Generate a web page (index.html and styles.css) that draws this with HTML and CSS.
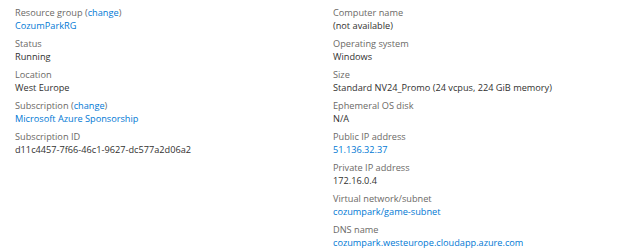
FILE: index.html
```html
<!DOCTYPE html>
<html>
<head>
<meta charset="utf-8">
<link rel="stylesheet" href="styles.css">
</head>
<body>
<div class="essentials">
  <div class="col">
    <div class="item"><div class="label">Resource group (<a class="link" href="#">change</a>)</div><div class="value"><a class="link" href="#">CozumParkRG</a></div></div>
    <div class="item"><div class="label">Status</div><div class="value">Running</div></div>
    <div class="item"><div class="label">Location</div><div class="value">West Europe</div></div>
    <div class="item"><div class="label">Subscription (<a class="link" href="#">change</a>)</div><div class="value"><a class="link" href="#">Microsoft Azure Sponsorship</a></div></div>
    <div class="item"><div class="label">Subscription ID</div><div class="value">d11c4457-7f66-46c1-9627-dc577a2d06a2</div></div>
  </div>
  <div class="col">
    <div class="item"><div class="label">Computer name</div><div class="value">(not available)</div></div>
    <div class="item"><div class="label">Operating system</div><div class="value">Windows</div></div>
    <div class="item"><div class="label">Size</div><div class="value">Standard NV24_Promo (24 vcpus, 224 GiB memory)</div></div>
    <div class="item"><div class="label">Ephemeral OS disk</div><div class="value">N/A</div></div>
    <div class="item"><div class="label">Public IP address</div><div class="value"><a class="link" href="#">51.136.32.37</a></div></div>
    <div class="item"><div class="label">Private IP address</div><div class="value">172.16.0.4</div></div>
    <div class="item"><div class="label">Virtual network/subnet</div><div class="value"><a class="link" href="#">cozumpark/game-subnet</a></div></div>
    <div class="item"><div class="label">DNS name</div><div class="value"><a class="link" href="#">cozumpark.westeurope.cloudapp.azure.com</a></div></div>
  </div>
</div>
</body>
</html>
```
FILE: styles.css
```css
html, body {
  margin: 0;
  padding: 0;
  background: #ffffff;
}
body {
  font-family: "Open Sans", "Noto Sans", sans-serif;
  font-size: 9.2px;
  color: #323130;
}
.essentials {
  display: grid;
  grid-template-columns: 318px 1fr;
  padding: 6px 0 0 15px;
}
.col {
  display: flex;
  flex-direction: column;
  gap: 5px;
}
.item {
  display: flex;
  flex-direction: column;
}
.label {
  line-height: 13px;
  color: #6b6966;
  white-space: nowrap;
}
.value {
  line-height: 13px;
  color: #323130;
  white-space: nowrap;
}
.link {
  color: #0078d4;
  text-decoration: none;
}
```
